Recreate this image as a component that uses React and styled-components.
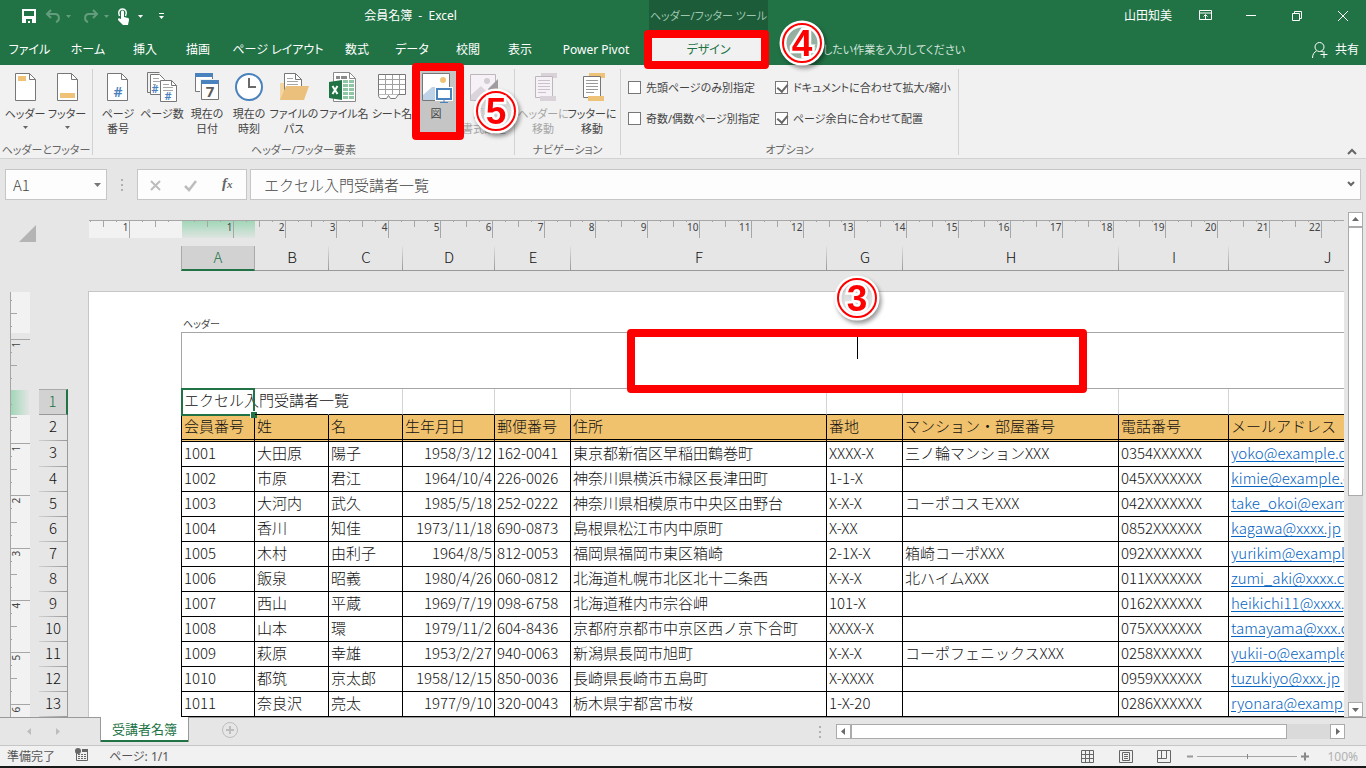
import { useState } from "react";
import styled, { createGlobalStyle, css } from "styled-components";

const COLORS = {
    green: "#217346",
    greenDark: "#1c5c39",
    ribbon: "#f1f1f1",
    frame: "#e6e6e6",
    line: "#c6c6c6",
    tick: "#a6a6a6",
    text: "#444444",
    gray: "#777777",
    blue: "#4a82bd",
    sand: "#eec277",
    red: "#ff0000",
};

const UI_FONT = `"Noto Sans", "Noto Sans CJK JP", sans-serif`;
const CELL_FONT = `"Noto Sans CJK JP", sans-serif`;

const GlobalStyle = createGlobalStyle`
    * {
        box-sizing: border-box;
    }

    body {
        margin: 0;
        overflow: hidden;
    }

    button,
    input,
    textarea {
        margin: 0;
        padding: 0;
        border: none;
        background: none;
        color: inherit;
        font: inherit;
        font-feature-settings: inherit;
    }
`;

const Window = styled.div`
    display: flex;
    flex-direction: column;
    height: 100vh;
    overflow: hidden;

    background: ${COLORS.frame};
    color: ${COLORS.text};
    font-family: ${UI_FONT};
    font-size: 12px;
    line-height: 15px;
    font-feature-settings: "palt";
    white-space: nowrap;
`;

/* title bar */

const TitleBar = styled.header`
    display: flex;
    flex: none;
    height: 32px;

    background: ${COLORS.green};
    color: #ffffff;
`;

const QuickAccess = styled.div`
    display: flex;
    align-items: center;
    flex: none;
    width: 172px;
    padding-left: 20px;
`;

const QuickButton = styled.button`
    display: flex;
    align-items: center;
    justify-content: center;
    width: ${({ $w }) => $w}px;
    height: 24px;

    opacity: ${({ disabled }) => (disabled ? 0.3 : 1)};
`;

const DocTitle = styled.div`
    flex: 0 1 477px;

    line-height: 31px;
    text-align: center;
    word-break: keep-all;
`;

const ContextTitle = styled.div`
    flex: none;
    width: 119px;

    background: ${COLORS.greenDark};
    color: #9fc6af;
    font-size: 11px;
    line-height: 31px;
    text-align: center;
`;

const Spacer = styled.div`
    flex: 1;
`;

const UserName = styled.div`
    padding-right: 10px;

    line-height: 31px;
`;

const CaptionButton = styled.button`
    display: flex;
    align-items: center;
    justify-content: center;
    width: 46px;
    height: 31px;
`;

/* ribbon tabs */

const TabBar = styled.nav`
    display: flex;
    flex: none;
    height: 33px;

    background: ${COLORS.green};
    color: #ffffff;
`;

const Tab = styled.button`
    flex: none;
    width: ${({ $w }) => $w}px;
    height: 33px;
    padding-top: 2px;

    text-align: center;

    ${({ $active }) =>
        $active &&
        css`
            position: relative;
            margin-left: 4px;

            background: ${COLORS.ribbon};
            color: ${COLORS.green};
        `}
`;

const TellMe = styled.input`
    width: 200px;
    margin-left: 33px;
    padding-top: 2px;

    font-size: 11px;

    &::placeholder {
        color: #d3e3da;
        opacity: 1;
    }
`;

const Share = styled.button`
    display: flex;
    align-items: center;
    gap: 7px;
    padding: 2px 7px 0 0;
`;

/* callouts that lie over the window */

const Frame = styled.span`
    position: absolute;
    inset: ${({ $inset }) => $inset};
    z-index: 2;

    border: 8px solid ${COLORS.red};
    border-radius: 4px;
    pointer-events: none;
`;

const BadgeBox = styled.svg`
    position: absolute;
    left: ${({ $left }) => $left};
    top: ${({ $top }) => $top}px;
    z-index: 3;

    filter: drop-shadow(2px 3px 2px rgba(0, 0, 0, 0.4));
    overflow: visible;
    pointer-events: none;
`;

/* ribbon */

const Ribbon = styled.section`
    display: flex;
    flex: none;
    height: 94px;
    padding-top: 4px;

    background: ${COLORS.ribbon};
    border-bottom: 1px solid #d2d2d2;
    font-size: 11px;
`;

const Group = styled.div`
    display: flex;
    flex-direction: column;
    justify-content: space-between;
    flex: none;
    width: ${({ $w }) => $w}px;
    height: 86px;

    border-right: 1px solid #d2d2d2;
`;

const GroupBody = styled.div`
    display: flex;
    padding-left: 4px;
`;

const GroupName = styled.div`
    height: 13px;

    color: #666666;
    text-align: center;
`;

const ToolButton = styled.button`
    position: relative;
    display: flex;
    flex-direction: column;
    align-items: center;
    gap: 4px;
    flex: none;
    width: ${({ $w }) => $w}px;
    height: 66px;
    padding-top: 1px;

    color: ${COLORS.text};

    &:disabled {
        color: #a5a5a5;
    }

    ${({ $pressed }) =>
        $pressed &&
        css`
            background: #c5c5c5;
        `}
`;

const ToolLabel = styled.span`
    display: flex;
    flex-direction: column;
    align-items: center;
    width: 0;
`;

const Options = styled.div`
    display: grid;
    grid-template-columns: 147px auto;
    row-gap: 16px;
    justify-content: start;
    padding: 11px 0 0 7px;
`;

const Check = styled.label`
    display: flex;
    align-items: center;
    gap: 5px;
    height: 15px;

    input {
        position: relative;
        width: 13px;
        height: 13px;

        appearance: none;
        background: #ffffff;
        border: 1px solid ${COLORS.gray};
    }

    input:checked::after {
        position: absolute;
        left: 3px;
        top: 0;
        width: 5px;
        height: 8px;

        border: solid #666666;
        border-width: 0 2px 2px 0;
        content: "";
        transform: rotate(40deg);
    }
`;

const Collapse = styled.button`
    align-self: flex-end;
    height: 16px;
    padding-right: 9px;
`;

/* formula bar */

const FormulaBar = styled.div`
    display: flex;
    flex: none;
    height: 51px;
    padding: 10px 5px;

    font-family: ${CELL_FONT};
    font-size: 15px;
    font-weight: 300;
    font-feature-settings: normal;
`;

const Field = styled.div`
    display: flex;
    align-items: center;
    flex: ${({ $w }) => ($w ? `0 0 ${$w}px` : 1)};
    justify-content: ${({ $around }) =>
        $around ? "space-around" : "space-between"};
    min-width: 0;
    padding: 0 ${({ $around }) => ($around ? 0 : 5)}px;

    background: #fdfdfd;
    border: 1px solid ${COLORS.line};

    input {
        flex: 1;
        width: 0;
        min-width: 0;
        padding-left: ${({ $indent = 2 }) => $indent}px;
    }
`;

const FormulaGap = styled.div`
    width: 3px;
`;

const Dots = styled.div`
    display: flex;
    flex-direction: column;
    align-items: center;
    justify-content: center;
    gap: 3px;
    width: ${({ $w }) => $w}px;

    &::before,
    &::after,
    i {
        width: 2px;
        height: 2px;

        background: #b0b0b0;
        content: "";
    }
`;

/* worksheet */

const Workspace = styled.main`
    display: grid;
    grid-template-columns: 68px minmax(0, 1fr) 22px;
    grid-template-rows: 81px minmax(0, 1fr);
    flex: 1;
    min-height: 0;
    overflow: hidden;
`;

const Corner = styled.button`
    padding: 15px 0 0 19px;

    text-align: left;

    svg {
        display: block;
        height: 100%;
    }
`;

const TopHeads = styled.div`
    overflow: hidden;
    padding: 10px 0 0 20px;
`;

const ColumnHeads = styled.div`
    display: flex;
    margin: 8px 0 0 -20px;
    padding-left: 113px;
`;

const ColumnHead = styled.div`
    flex: none;
    width: ${({ $w }) => $w}px;
    height: 25px;

    background: linear-gradient(#e0e0e0, #999999) right / 1px 100% no-repeat;
    border-bottom: 1px solid #999999;
    color: #111111;
    font-family: ${CELL_FONT};
    font-size: 15px;
    font-weight: 300;
    line-height: 22px;
    text-align: center;

    ${({ $active }) =>
        $active &&
        css`
            background: #d2d2d2;
            border-right: 1px solid #aaaaaa;
            border-bottom: 2px solid ${COLORS.green};
            border-left: 1px solid #aaaaaa;
            color: ${COLORS.green};
        `}
`;

const SideHeads = styled.div`
    display: flex;
    gap: 9px;
    overflow: hidden;
    padding-left: 10px;
`;

const RowHeads = styled.div`
    flex: none;
    width: 29px;
    padding-top: 98px;
`;

const RowHead = styled.div`
    height: ${({ $h }) => $h}px;

    background: linear-gradient(to right, #d0d0d0, #999999) bottom / 100% 1px
        no-repeat;
    border-right: 1px solid #999999;
    color: #111111;
    font-family: ${CELL_FONT};
    font-size: 15px;
    font-weight: 300;
    line-height: 22px;
    text-align: center;

    ${({ $active }) =>
        $active &&
        css`
            background: #d2d2d2;
            border-top: 1px solid #aaaaaa;
            border-right: 2px solid ${COLORS.green};
            border-bottom: 1px solid #999999;
            color: ${COLORS.green};
        `}
`;

const Sheet = styled.div`
    overflow-x: clip;
    overflow-y: visible;
    padding-left: 20px;
`;

const Page = styled.div`
    width: 1537px;
    min-height: 100%;
    padding-left: 92px;

    background: #ffffff;
    border-top: 1px solid ${COLORS.line};
    border-left: 1px solid ${COLORS.line};
`;

const HeaderLabel = styled.div`
    height: 40px;
    padding: 25px 0 0 2px;

    font-size: 10px;
`;

const HeaderBox = styled.div`
    display: flex;
    width: 1352px;
    height: 57px;

    border: 1px solid #a6a6a6;
`;

const HeaderSection = styled.div`
    position: relative;
    flex: 1;

    textarea {
        display: block;
        width: 100%;
        height: 55px;

        outline: none;
        resize: none;
        text-align: center;
    }
`;

const Caret = styled.span`
    position: absolute;
    left: 50%;
    top: 4px;
    width: 1px;
    height: 22px;

    background: #000000;
`;

const Table = styled.table`
    width: 1245px;

    border-collapse: separate;
    border-spacing: 0;
    color: #111111;
    font-family: ${CELL_FONT};
    font-size: 15px;
    font-weight: 300;
    font-feature-settings: normal;
    line-height: 22px;
    table-layout: fixed;

    td,
    th {
        height: 25px;
        padding: 0 2px;

        border: solid #000000;
        border-width: 0 1px 1px 0;
        font-weight: 300;
        text-align: left;
        vertical-align: top;
    }

    td:first-child,
    th:first-child {
        border-left-width: 1px;
    }
`;

const TitleRow = styled.tr`
    td {
        position: relative;
        height: 26px;

        border-right-color: #d4d4d4;
    }

    td:nth-child(-n + 2) {
        border-right-color: transparent;
        border-left-color: transparent;
    }
`;

const HeadRow = styled.tr`
    th {
        height: 27px;

        background: #f1c26d;
        border-bottom: 3px double #000000;
    }
`;

const DateCell = styled.td`
    && {
        text-align: right;
    }
`;

const MailLink = styled.a`
    color: #0563c1;
    text-underline-offset: 2px;
`;

const Selection = styled.span`
    position: absolute;
    inset: -1px -1px -2px -1px;

    border: 2px solid ${COLORS.green};

    &::after {
        position: absolute;
        right: -4px;
        bottom: -4px;
        width: 6px;
        height: 6px;

        background: ${COLORS.green};
        border: solid #ffffff;
        border-width: 1px 0 0 1px;
        content: "";
    }
`;

/* scroll bars */

const VerticalBar = styled.div`
    display: flex;
    flex-direction: column;
    grid-column: 3;
    grid-row: 1 / 3;
    width: 15px;
    margin: 2px 0 0 4px;

    background: #dadada;
`;

const ScrollButton = styled.button`
    display: flex;
    align-items: center;
    justify-content: center;
    flex: none;
    width: 15px;
    height: 15px;

    background: #ffffff;
    border: 1px solid #ababab;
`;

const Thumb = styled.div`
    flex: 0 1 ${({ $size }) => $size};

    background: #ffffff;
    border: 1px solid #ababab;
`;

/* sheet tabs and status bar */

const SheetBar = styled.div`
    display: flex;
    flex: none;
    height: 28px;
`;

const SheetNav = styled.div`
    display: flex;
    gap: 21px;
    align-items: center;
    width: 100px;
    padding-left: 26px;

    border-top: 1px solid #999999;
`;

const SheetTab = styled.button`
    width: 89px;
    height: 25px;

    background: #ffffff;
    border: solid #999999;
    border-width: 0 1px 0 1px;
    box-shadow: inset 0 -2px ${COLORS.green};
    color: ${COLORS.green};
    font-size: 13px;
`;

const SheetRest = styled.div`
    display: flex;
    align-items: center;
    flex: 1;
    padding: 0 21px 0 33px;

    border-top: 1px solid #999999;
`;

const HorizontalBar = styled.div`
    display: flex;
    flex: 0 1 509px;

    background: #dadada;
`;

const StatusBar = styled.footer`
    display: flex;
    align-items: center;
    flex: none;
    height: 21px;
    padding: 0 8px 0 7px;

    background: ${COLORS.ribbon};
    border-top: 1px solid ${COLORS.line};
    color: #555555;
`;

const StatusItem = styled.span`
    padding-right: 20px;
`;

const Views = styled.div`
    display: flex;
    gap: 24px;
    margin-right: 16px;

    svg {
        display: block;
    }
`;

const ZoomSlider = styled.input`
    width: 100px;
    height: 13px;
    margin: 0 4px;

    appearance: none;
    background: linear-gradient(#a6a6a6, #a6a6a6) center / 100% 1px no-repeat;

    &::-webkit-slider-thumb {
        width: 1px;
        height: 5px;

        appearance: none;
        background: #888888;
    }
`;

const ZoomStep = styled.button`
    display: flex;
    align-items: center;
`;

const ZoomValue = styled.span`
    width: 49px;

    color: #b0b0b0;
    text-align: right;
`;

const Taskbar = styled.div`
    flex: none;
    height: 2px;

    background: #181a1a;
`;

/* drawings */

const Icon = ({ children, w = 32, h = 32 }) => (
    <svg
        width={w}
        height={h}
        viewBox={`0 0 ${w} ${h}`}
        fill="none"
        overflow="visible"
        aria-hidden="true"
    >
        {children}
    </svg>
);

const Doc = ({ x = 0 }) => (
    <>
        <path
            d={`M${x + 0.5} 3.5h14l6 6v21h-20z`}
            fill="#fff"
            stroke={COLORS.gray}
        />
        <path d={`M${x + 14.5} 3.5v6h6`} stroke={COLORS.gray} />
    </>
);

const HeaderIcon = () => (
    <Icon>
        <Doc x={6} />
        <path d="M9 6h8v5H9z" fill={COLORS.sand} />
    </Icon>
);

const FooterIcon = () => (
    <Icon>
        <Doc x={6} />
        <path d="M9 23h15v5H9z" fill={COLORS.sand} />
    </Icon>
);

const Hash = ({ x, y, size }) => (
    <text
        x={x}
        y={y}
        fontSize={size}
        fontWeight="600"
        fill={COLORS.blue}
        textAnchor="middle"
    >
        #
    </text>
);

const PageNumberIcon = () => (
    <Icon>
        <Doc x={5} />
        <Hash x={16} y={27} size={14} />
    </Icon>
);

const PageCountIcon = () => (
    <Icon>
        <path d="M5.5 22.5h-4v-20h12" stroke={COLORS.gray} />
        <path d="M4.5 4.5h9l5 5v15h-14z" fill="#fff" stroke={COLORS.gray} />
        <path d="M7 8.5h6M7 11.5h8M7 14.5h3" stroke="#a6a6a6" />
        <Hash x={9} y={23} size={11} />
        <path d="M14.5 10.5h11l5 5v16h-16z" fill="#fff" stroke={COLORS.gray} />
        <path d="M25.5 10.5v5h5" stroke={COLORS.gray} />
        <path d="M17 14.5h6M17 17.5h10M17 20.5h10" stroke="#a6a6a6" />
        <Hash x={22} y={30} size={11} />
    </Icon>
);

const DateIcon = () => (
    <Icon>
        <path d="M4.5 3.5h17v18h-17z" fill="#fff" stroke={COLORS.gray} />
        <path d="M4 3h18v4H4z" fill={COLORS.blue} />
        <path d="M9 9h20v22H9z" fill={COLORS.ribbon} />
        <path d="M10.5 10.5h17v19h-17z" fill="#fff" stroke={COLORS.gray} />
        <path d="M10 10h18v4H10z" fill={COLORS.blue} />
        <text
            x="19"
            y="27"
            fontSize="15"
            fontWeight="700"
            fill="#5c5c5c"
            textAnchor="middle"
        >
            7
        </text>
    </Icon>
);

const TimeIcon = () => (
    <Icon>
        <circle
            cx="16"
            cy="17"
            r="13"
            fill="#fff"
            stroke={COLORS.blue}
            strokeWidth="2"
        />
        <path d="M16 8v9h7" stroke="#6a6a6a" strokeWidth="2" />
    </Icon>
);

const PathIcon = () => (
    <Icon>
        <path d="M6.5 24V3.5h11l6 6V20" fill="#fff" stroke={COLORS.gray} />
        <path d="M17.5 3.5v6h6" stroke={COLORS.gray} />
        <path d="M9 8.5h6M9 11.5h11M9 14.5h11" stroke="#a6a6a6" />
        <path d="M2 30V13h4v8h5z" fill="#f3d6a0" />
        <path d="M8 16h23l-5 14H2z" fill="#ebc07d" />
    </Icon>
);

const FileNameIcon = () => (
    <Icon>
        <path d="M5.5 2.5h16l6 6v23h-22z" fill="#fff" stroke="#8a8a8a" />
        <path d="M21.5 2.5v6h6" stroke="#8a8a8a" />
        <path d="M8 6h4v3H8zM13 6h6v3h-6z" fill="#8a8a8a" />
        <path
            d="M15 10h5v3h-5zM21 10h5v3h-5zM15 14h5v3h-5zM21 14h5v3h-5zM15 18h5v3h-5zM21 18h5v3h-5zM15 22h5v3h-5zM21 22h5v3h-5zM15 26h5v3h-5zM21 26h5v3h-5z"
            fill="#8fc7a6"
        />
        <path d="M1 12l13-2v20L1 28z" fill={COLORS.green} />
        <path d="M4.5 16l5 8M9.5 16l-5 8" stroke="#fff" strokeWidth="2" />
    </Icon>
);

const SheetNameIcon = () => (
    <Icon>
        <path d="M2.5 4.5h27v20h-27z" fill="#fff" stroke={COLORS.gray} />
        <path
            d="M9.5 5v19M16.5 5v19M23.5 5v19M3 9.5h26M3 14.5h26M3 19.5h26"
            stroke="#a0a0a0"
        />
        <path
            d="M2.5 24.5c0 3 1 4 3 4h5l2-3 2 3h5l3-4"
            fill="#fff"
            stroke={COLORS.gray}
        />
    </Icon>
);

const PictureIcon = () => (
    <Icon>
        <path d="M2.5 3.5h27v27h-27z" fill="#fff" stroke={COLORS.gray} />
        <circle cx="23" cy="10" r="3" fill={COLORS.sand} />
        <path d="M3 25l9-8h4l2 2v11H3z" fill="#bfd3e8" />
        <path d="M15 17h18v14H15z" fill="#fff" />
        <path
            d="M17 19h14v10H17z"
            fill="#fff"
            stroke={COLORS.blue}
            strokeWidth="2"
        />
        <path d="M24 30v2M20 32.5h8" stroke={COLORS.blue} />
    </Icon>
);

const FormatPictureIcon = () => (
    <Icon>
        <path d="M2.5 4.5h25v26h-25z" fill="#f6f1f6" stroke="#bdb6bd" />
        <circle cx="19" cy="11" r="3" fill="#d3ccd3" />
        <path d="M3 25l10-9 9 9v5H3z" fill="#dbd4db" />
        <path d="M20 19L30 9v10l-7 6z" fill="#a09ca0" />
    </Icon>
);

const GoToIcon = ({ stroke, bar, rule, fill, x = 7 }) => (
    <Icon>
        <path d={`M${x + 6} 3h16v5h-5V6H${x + 6}z`} fill={bar} />
        <path d={`M${x + 0.5} 6.5h17v21h-17z`} fill={fill} stroke={stroke} />
        <path
            d={`M${x + 3} 10.5h12m-12 3h12m-12 3h12m-12 3h12m-12 3h8`}
            stroke={rule}
        />
        <path d={`M${x + 5} 26h16v5H${x + 5}z`} fill={bar} />
    </Icon>
);

const arrows = {
    up: "M0 5h7L3.5 1z",
    down: "M0 2h7L3.5 6z",
    left: "M5 0v7L1 3.5z",
    right: "M2 0v7l4-3.5z",
};

const Arrow = ({ dir, color = "#6a6a6a" }) => (
    <Icon w={7} h={7}>
        <path d={arrows[dir]} fill={color} />
    </Icon>
);

const Badge = ({ n, left, top }) => (
    <BadgeBox $left={left} $top={top} width="46" height="46" viewBox="0 0 46 46">
        <circle
            cx="23"
            cy="23"
            r="19"
            fill="#ffffff"
            fillOpacity="0.55"
            stroke="#ffffff"
            strokeWidth="7"
        />
        <circle
            cx="23"
            cy="23"
            r="19"
            fill="none"
            stroke={COLORS.red}
            strokeWidth="2"
        />
        <text
            x="23"
            y="36"
            fontFamily="Liberation Sans, sans-serif"
            fontSize="37"
            fontWeight="700"
            textAnchor="middle"
            fill={COLORS.red}
            stroke="#ffffff"
            strokeWidth="5"
            paintOrder="stroke"
        >
            {n}
        </text>
    </BadgeBox>
);

/* rulers: 0 is the edge of the print area, one unit is a centimetre */

const range = (from, to) =>
    Array.from({ length: to - from + 1 }, (_, i) => from + i);

const tickLength = (q, full) => (q % 4 === 0 ? full : q % 2 === 0 ? 7 : 2);

const TopRuler = () => {
    const at = (q) => Math.round(93 + (q / 4) * 51.8) + 0.5;

    return (
        <svg width="1280" height="18" display="block" aria-hidden="true">
            <defs>
                <linearGradient id="across" x1="0" y1="0" x2="0" y2="1">
                    <stop offset="0" stopColor="#9ed6b6" />
                    <stop offset="1" stopColor="#dfe5e1" />
                </linearGradient>
            </defs>
            <rect x="1" width="93" height="18" fill="#f2f2f2" />
            <rect x="94" width="73" height="18" fill="url(#across)" />
            <path d="M1 .5h1279" stroke={COLORS.tick} />
            {range(-7, 91)
                .filter((q) => q !== 0)
                .map((q) => (
                    <path
                        key={q}
                        d={`M${at(q)} 0v${tickLength(q, 18)}`}
                        stroke={COLORS.tick}
                    />
                ))}
            {range(-1, 22)
                .filter((n) => n !== 0)
                .map((n) => (
                    <text
                        key={n}
                        x={at(n * 4) - 1}
                        y="11"
                        fontSize="10"
                        textAnchor="end"
                        fill={COLORS.text}
                    >
                        {Math.abs(n)}
                    </text>
                ))}
        </svg>
    );
};

const SideRuler = () => {
    const at = (q) => Math.round(100 + (q / 4) * 52.2) + 0.5;

    return (
        <svg width="20" height="700" display="block" aria-hidden="true">
            <defs>
                <linearGradient id="down">
                    <stop offset="0" stopColor="#9ed6b6" />
                    <stop offset="1" stopColor="#e6e6e6" />
                </linearGradient>
            </defs>
            <rect y="1" width="20" height="41" fill="#f2f2f2" />
            <rect y="99" width="20" height="25" fill="url(#down)" />
            <rect y="124" width="20" height="576" fill="#f2f2f2" />
            <path d="M.5 1v699" stroke={COLORS.tick} />
            {range(-7, 44)
                .filter((q) => q !== 0)
                .map((q) => (
                    <path
                        key={q}
                        d={`M0 ${at(q)}h${tickLength(q, 20)}`}
                        stroke={COLORS.tick}
                    />
                ))}
            {range(-1, 10)
                .filter((n) => n !== 0)
                .map((n) => (
                    <text
                        key={n}
                        transform={`translate(10 ${at(n * 4) + 8}) rotate(-90)`}
                        fontSize="10"
                        fill={COLORS.text}
                    >
                        {Math.abs(n)}
                    </text>
                ))}
        </svg>
    );
};

/* data */

const tabs = [
    ["ファイル", 59],
    ["ホーム", 58],
    ["挿入", 56],
    ["描画", 50],
    ["ページ レイアウト", 110],
    ["数式", 48],
    ["データ", 62],
    ["校閲", 50],
    ["表示", 54],
    ["Power Pivot", 98],
];

const columns = [
    ["A", 74],
    ["B", 74],
    ["C", 74],
    ["D", 92],
    ["E", 76],
    ["F", 256],
    ["G", 76],
    ["H", 216],
    ["I", 110],
    ["J", 197],
];

const heads = [
    "会員番号",
    "姓",
    "名",
    "生年月日",
    "郵便番号",
    "住所",
    "番地",
    "マンション・部屋番号",
    "電話番号",
    "メールアドレス",
];

const members = [
    ["1001", "大田原", "陽子", "1958/3/12", "162-0041", "東京都新宿区早稲田鶴巻町", "XXXX-X", "三ノ輪マンションXXX", "0354XXXXXX", "yoko@example.com"],
    ["1002", "市原", "君江", "1964/10/4", "226-0026", "神奈川県横浜市緑区長津田町", "1-1-X", "", "045XXXXXXX", "kimie@example.com"],
    ["1003", "大河内", "武久", "1985/5/18", "252-0222", "神奈川県相模原市中央区由野台", "X-X-X", "コーポコスモXXX", "042XXXXXXX", "take_okoi@example.com"],
    ["1004", "香川", "知佳", "1973/11/18", "690-0873", "島根県松江市内中原町", "X-XX", "", "0852XXXXXX", "kagawa@xxxx.jp"],
    ["1005", "木村", "由利子", "1964/8/5", "812-0053", "福岡県福岡市東区箱崎", "2-1X-X", "箱崎コーポXXX", "092XXXXXXX", "yurikim@example.com"],
    ["1006", "飯泉", "昭義", "1980/4/26", "060-0812", "北海道札幌市北区北十二条西", "X-X-X", "北ハイムXXX", "011XXXXXXX", "zumi_aki@xxxx.co.jp"],
    ["1007", "西山", "平蔵", "1969/7/19", "098-6758", "北海道稚内市宗谷岬", "101-X", "", "0162XXXXXX", "heikichi11@xxxx.jp"],
    ["1008", "山本", "環", "1979/11/2", "604-8436", "京都府京都市中京区西ノ京下合町", "XXXX-X", "", "075XXXXXXX", "tamayama@xxx.co.jp"],
    ["1009", "萩原", "幸雄", "1953/2/27", "940-0063", "新潟県長岡市旭町", "X-X-X", "コーポフェニックスXXX", "0258XXXXXX", "yukii-o@example.com"],
    ["1010", "都筑", "京太郎", "1958/12/15", "850-0036", "長崎県長崎市五島町", "X-XXXX", "", "0959XXXXXX", "tuzukiyo@xxx.jp"],
    ["1011", "奈良沢", "亮太", "1977/9/10", "320-0043", "栃木県宇都宮市桜", "1-X-20", "", "0286XXXXXX", "ryonara@example.com"],
];

const Tool = ({ icon, lines, w, menu, children, ...props }) => (
    <ToolButton $w={w} {...props}>
        {icon}
        <ToolLabel>
            {lines.map((line) => (
                <span key={line}>{line}</span>
            ))}
            {menu && (
                <svg width="5" height="12" aria-hidden="true">
                    <path d="M0 5h5L2.5 8z" fill="#666" />
                </svg>
            )}
        </ToolLabel>
        {children}
    </ToolButton>
);

const Option = ({ label, initial = false }) => {
    const [checked, setChecked] = useState(initial);

    return (
        <Check>
            <input
                type="checkbox"
                checked={checked}
                onChange={() => setChecked(!checked)}
            />
            {label}
        </Check>
    );
};

function Title() {
    return (
        <TitleBar>
            <QuickAccess>
                <QuickButton $w={17} aria-label="上書き保存">
                    <Icon w={14} h={14}>
                        <path
                            d="M0 0h14v14H0zM2 2v5h10V2zM4 10v4h2v-2h2v2h2v-4z"
                            fill="#fff"
                            fillRule="evenodd"
                        />
                    </Icon>
                </QuickButton>
                <QuickButton $w={42} disabled aria-label="元に戻す">
                    <Icon w={26} h={14}>
                        <path
                            d="M6 1L2 5l4 4M2 5h8c5 0 5 7 1 8"
                            stroke="#fff"
                            strokeWidth="2"
                        />
                        <path d="M21 6h5l-2.5 3z" fill="#fff" />
                    </Icon>
                </QuickButton>
                <QuickButton $w={34} disabled aria-label="やり直し">
                    <Icon w={26} h={14}>
                        <path
                            d="M10 1l4 4-4 4M14 5H6c-5 0-5 7-1 8"
                            stroke="#fff"
                            strokeWidth="2"
                        />
                        <path d="M21 6h5l-2.5 3z" fill="#fff" />
                    </Icon>
                </QuickButton>
                <QuickButton $w={34} aria-label="タッチ/マウス モードの切り替え">
                    <Icon w={26} h={17}>
                        <path
                            d="M2.5 8c-2-4 0-7 3-7s5 3 3 7"
                            stroke="#fff"
                            strokeWidth="1.5"
                        />
                        <path
                            d="M4 4c0-2 3-2 3 0v5l4 1c1 0 1 1 1 2l-1 5H6l-5-5c0-2 1-2 3-1z"
                            fill="#fff"
                        />
                        <path d="M21 7h5l-2.5 3z" fill="#fff" />
                    </Icon>
                </QuickButton>
                <Spacer />
                <QuickButton
                    $w={21}
                    aria-label="クイック アクセス ツール バーのユーザー設定"
                >
                    <Icon w={5} h={7}>
                        <path d="M0 0h5v1H0zM0 3h5L2.5 6z" fill="#fff" />
                    </Icon>
                </QuickButton>
            </QuickAccess>
            <DocTitle>会員名簿&nbsp; -&nbsp; Excel</DocTitle>
            <ContextTitle>ヘッダー/フッター ツール</ContextTitle>
            <Spacer />
            <UserName>山田知美</UserName>
            <CaptionButton aria-label="リボンの表示オプション">
                <Icon w={13} h={11}>
                    <path
                        d="M.5 .5h12v9H.5zM1 3h11M6.5 9V5M4.5 6.5l2-2 2 2"
                        stroke="#fff"
                    />
                </Icon>
            </CaptionButton>
            <CaptionButton aria-label="最小化">
                <Icon w={10} h={1}>
                    <path d="M0 .5h10" stroke="#fff" />
                </Icon>
            </CaptionButton>
            <CaptionButton aria-label="元に戻す (縮小)">
                <Icon w={10} h={10}>
                    <path d="M.5 2.5h7v7h-7zM2.5 2V.5h7v7H8" stroke="#fff" />
                </Icon>
            </CaptionButton>
            <CaptionButton aria-label="閉じる">
                <Icon w={10} h={10}>
                    <path d="M0 0l10 10M10 0L0 10" stroke="#fff" />
                </Icon>
            </CaptionButton>
        </TitleBar>
    );
}

function Tabs() {
    return (
        <TabBar>
            {tabs.map(([name, w]) => (
                <Tab key={name} $w={w}>
                    {name}
                </Tab>
            ))}
            <Tab $w={119} $active>
                デザイン
                <Frame $inset="-2px -1px -4px -5px" />
                <Badge n="4" left="130px" top={-12} />
            </Tab>
            <TellMe
                aria-label="操作アシスト"
                placeholder="実行したい作業を入力してください"
            />
            <Spacer />
            <Share>
                <Icon w={16} h={16}>
                    <circle cx="7.5" cy="5" r="4.5" stroke="#fff" />
                    <path
                        d="M.5 16c0-4 2-6 4-7M9 9l2 1M12 9v7M8.5 12.5h7"
                        stroke="#fff"
                    />
                </Icon>
                共有
            </Share>
        </TabBar>
    );
}

function Tools() {
    return (
        <Ribbon>
            <Group $w={93}>
                <GroupBody>
                    <Tool w={42} icon={<HeaderIcon />} lines={["ヘッダー"]} menu />
                    <Tool w={42} icon={<FooterIcon />} lines={["フッター"]} menu />
                </GroupBody>
                <GroupName>ヘッダーとフッター</GroupName>
            </Group>
            <Group $w={422}>
                <GroupBody>
                    <Tool w={42} icon={<PageNumberIcon />} lines={["ページ", "番号"]} />
                    <Tool w={46} icon={<PageCountIcon />} lines={["ページ数"]} />
                    <Tool w={44} icon={<DateIcon />} lines={["現在の", "日付"]} />
                    <Tool w={40} icon={<TimeIcon />} lines={["現在の", "時刻"]} />
                    <Tool w={50} icon={<PathIcon />} lines={["ファイルの", "パス"]} />
                    <Tool w={50} icon={<FileNameIcon />} lines={["ファイル名"]} />
                    <Tool w={46} icon={<SheetNameIcon />} lines={["シート名"]} />
                    <Tool w={42} icon={<PictureIcon />} lines={["図"]} $pressed>
                        <Frame $inset="-6px -7px -5px -3px" />
                    </Tool>
                    <Tool
                        w={54}
                        icon={<FormatPictureIcon />}
                        lines={["図の", "書式設定"]}
                        disabled
                    >
                        <Badge n="5" left="16px" top={19} />
                    </Tool>
                </GroupBody>
                <GroupName>ヘッダー/フッター要素</GroupName>
            </Group>
            <Group $w={106}>
                <GroupBody>
                    <Tool
                        w={48}
                        icon={
                            <GoToIcon
                                x={8}
                                stroke="#bdb6bd"
                                bar="#d9d2d9"
                                rule="#c9c2c9"
                                fill="#f6f1f6"
                            />
                        }
                        lines={["ヘッダーに", "移動"]}
                        disabled
                    />
                    <Tool
                        w={50}
                        icon={
                            <GoToIcon
                                stroke={COLORS.gray}
                                bar={COLORS.sand}
                                rule="#999"
                                fill="#fff"
                            />
                        }
                        lines={["フッターに", "移動"]}
                    />
                </GroupBody>
                <GroupName>ナビゲーション</GroupName>
            </Group>
            <Group $w={338}>
                <Options>
                    <Option label="先頭ページのみ別指定" />
                    <Option label="ドキュメントに合わせて拡大/縮小" initial />
                    <Option label="奇数/偶数ページ別指定" />
                    <Option label="ページ余白に合わせて配置" initial />
                </Options>
                <GroupName>オプション</GroupName>
            </Group>
            <Spacer />
            <Collapse aria-label="リボンを折りたたむ">
                <Icon w={10} h={6}>
                    <path d="M1 5l4-4 4 4" stroke="#666" strokeWidth="2" />
                </Icon>
            </Collapse>
        </Ribbon>
    );
}

function Formula() {
    return (
        <FormulaBar>
            <Field $w={102}>
                <input aria-label="名前ボックス" defaultValue="A1" />
                <Icon w={7} h={4}>
                    <path d="M0 0h7L3.5 4z" fill={COLORS.gray} />
                </Icon>
            </Field>
            <Dots $w={30}>
                <i />
            </Dots>
            <Field $w={110} $around>
                <button aria-label="キャンセル">
                    <Icon w={11} h={11}>
                        <path
                            d="M1 1l9 9M10 1l-9 9"
                            stroke="#bdbdbd"
                            strokeWidth="2"
                        />
                    </Icon>
                </button>
                <button aria-label="入力">
                    <Icon w={13} h={11}>
                        <path
                            d="M1 6l4 4 7-9"
                            stroke="#bdbdbd"
                            strokeWidth="2.5"
                        />
                    </Icon>
                </button>
                <button aria-label="関数の挿入">
                    <Icon w={13} h={14}>
                        <text
                            x="1"
                            y="11"
                            fontFamily="Liberation Serif, serif"
                            fontSize="15"
                            fontStyle="italic"
                            fontWeight="700"
                            fill="#666"
                        >
                            f
                            <tspan fontSize="11">x</tspan>
                        </text>
                    </Icon>
                </button>
            </Field>
            <FormulaGap />
            <Field $indent={8}>
                <input aria-label="数式バー" defaultValue="エクセル入門受講者一覧" />
                <Icon w={8} h={5}>
                    <path d="M1 0l3 3 3-3" stroke="#666" strokeWidth="2" />
                </Icon>
            </Field>
        </FormulaBar>
    );
}

function Cell({ value, column }) {
    if (column === "D") {
        return <DateCell>{value}</DateCell>;
    }

    if (column === "J") {
        return (
            <td>
                <MailLink href={`mailto:${value}`}>{value}</MailLink>
            </td>
        );
    }

    return <td>{value}</td>;
}

function Grid() {
    return (
        <Table>
            <colgroup>
                {columns.map(([name, w]) => (
                    <col key={name} width={w} />
                ))}
            </colgroup>
            <tbody>
                <TitleRow>
                    <td>
                        エクセル入門受講者一覧
                        <Selection />
                    </td>
                    {columns.slice(1).map(([name]) => (
                        <td key={name} />
                    ))}
                </TitleRow>
                <HeadRow>
                    {heads.map((head) => (
                        <th key={head} scope="col">
                            {head}
                        </th>
                    ))}
                </HeadRow>
                {members.map((member) => (
                    <tr key={member[0]}>
                        {member.map((value, i) => (
                            <Cell key={i} value={value} column={columns[i][0]} />
                        ))}
                    </tr>
                ))}
            </tbody>
        </Table>
    );
}

function Worksheet() {
    return (
        <Workspace>
            <Corner aria-label="すべて選択">
                <Icon w={17} h={66}>
                    <path d="M17 0v17H0z" fill="#b4b4b4" />
                </Icon>
            </Corner>
            <TopHeads>
                <TopRuler />
                <ColumnHeads>
                    {columns.map(([name, w], i) => (
                        <ColumnHead key={name} $w={w} $active={i === 0}>
                            {name}
                        </ColumnHead>
                    ))}
                </ColumnHeads>
            </TopHeads>
            <VerticalBar>
                <ScrollButton aria-label="上へ">
                    <Arrow dir="up" />
                </ScrollButton>
                <Thumb $size="269px" />
                <Spacer />
                <ScrollButton aria-label="下へ">
                    <Arrow dir="down" />
                </ScrollButton>
            </VerticalBar>
            <SideHeads>
                <SideRuler />
                <RowHeads>
                    {range(1, 13).map((n) => (
                        <RowHead key={n} $h={n < 4 ? 26 : 25} $active={n === 1}>
                            {n}
                        </RowHead>
                    ))}
                </RowHeads>
            </SideHeads>
            <Sheet>
                <Page>
                    <HeaderLabel>ヘッダー</HeaderLabel>
                    <HeaderBox>
                        <HeaderSection>
                            <textarea aria-label="ヘッダー左" />
                        </HeaderSection>
                        <HeaderSection>
                            <textarea aria-label="ヘッダー中央" />
                            <Caret />
                            <Frame $inset="-4px -5px -5px -5px" />
                            <Badge n="3" left="calc(50% - 23px)" top={-58} />
                        </HeaderSection>
                        <HeaderSection>
                            <textarea aria-label="ヘッダー右" />
                        </HeaderSection>
                    </HeaderBox>
                    <Grid />
                </Page>
            </Sheet>
        </Workspace>
    );
}

function Bottom() {
    return (
        <>
            <SheetBar>
                <SheetNav>
                    <Arrow dir="left" color="#bdbdbd" />
                    <Arrow dir="right" color="#bdbdbd" />
                </SheetNav>
                <SheetTab>受講者名簿</SheetTab>
                <SheetRest>
                    <button aria-label="新しいシート">
                        <Icon w={16} h={16}>
                            <circle cx="8" cy="8" r="7.5" stroke="#bdbdbd" />
                            <path
                                d="M8 4v8M4 8h8"
                                stroke="#bdbdbd"
                                strokeWidth="2"
                            />
                        </Icon>
                    </button>
                    <Spacer />
                    <Dots $w={32}>
                        <i />
                    </Dots>
                    <HorizontalBar>
                        <ScrollButton aria-label="左へ">
                            <Arrow dir="left" />
                        </ScrollButton>
                        <Thumb $size="436px" />
                        <Spacer />
                        <ScrollButton aria-label="右へ">
                            <Arrow dir="right" />
                        </ScrollButton>
                    </HorizontalBar>
                </SheetRest>
            </SheetBar>
            <StatusBar>
                <StatusItem>準備完了</StatusItem>
                <StatusItem>
                    <Icon w={14} h={13}>
                        <path d="M1.5 5v7.5h11v-11H7" stroke="#666" />
                        <circle cx="3" cy="3" r="3" fill="#666" />
                        <path d="M7 1h6v3H7z" fill="#666" />
                        <path
                            d="M3 6.5h2m1 0h2m1 0h2M3 8.5h2m1 0h2m1 0h2M3 10.5h2m1 0h2m1 0h2"
                            stroke="#666"
                        />
                    </Icon>
                </StatusItem>
                <StatusItem>ページ: 1/1</StatusItem>
                <Spacer />
                <Views>
                    <button aria-label="標準">
                        <Icon w={14} h={13}>
                            <path
                                d="M.5 .5h12v12H.5zM4.5 0v13M8.5 0v13M0 4.5h13M0 8.5h13"
                                stroke="#666"
                            />
                        </Icon>
                    </button>
                    <button aria-label="ページ レイアウト">
                        <Icon w={14} h={13}>
                            <path
                                d="M.5 .5h13v12H.5zM3.5 2.5h7v8h-7zM5 4.5h4M5 6.5h4M5 8.5h4"
                                stroke="#666"
                            />
                        </Icon>
                    </button>
                    <button aria-label="改ページ プレビュー">
                        <Icon w={14} h={13}>
                            <path
                                d="M.5 .5h13v12H.5zM.5 8.5h9V.5M4.5 .5v8"
                                stroke="#666"
                            />
                        </Icon>
                    </button>
                </Views>
                <ZoomStep aria-label="縮小">
                    <Icon w={6} h={9}>
                        <path d="M0 4.5h6" stroke="#999" strokeWidth="2" />
                    </Icon>
                </ZoomStep>
                <ZoomSlider type="range" aria-label="ズーム" defaultValue="50" />
                <ZoomStep aria-label="拡大">
                    <Icon w={8} h={9}>
                        <path
                            d="M0 4.5h8M4 .5v8"
                            stroke="#888"
                            strokeWidth="2"
                        />
                    </Icon>
                </ZoomStep>
                <ZoomValue>100%</ZoomValue>
            </StatusBar>
            <Taskbar />
        </>
    );
}

function App() {
    return (
        <Window>
            <GlobalStyle />
            <Title />
            <Tabs />
            <Tools />
            <Formula />
            <Worksheet />
            <Bottom />
        </Window>
    );
}

export default App;
